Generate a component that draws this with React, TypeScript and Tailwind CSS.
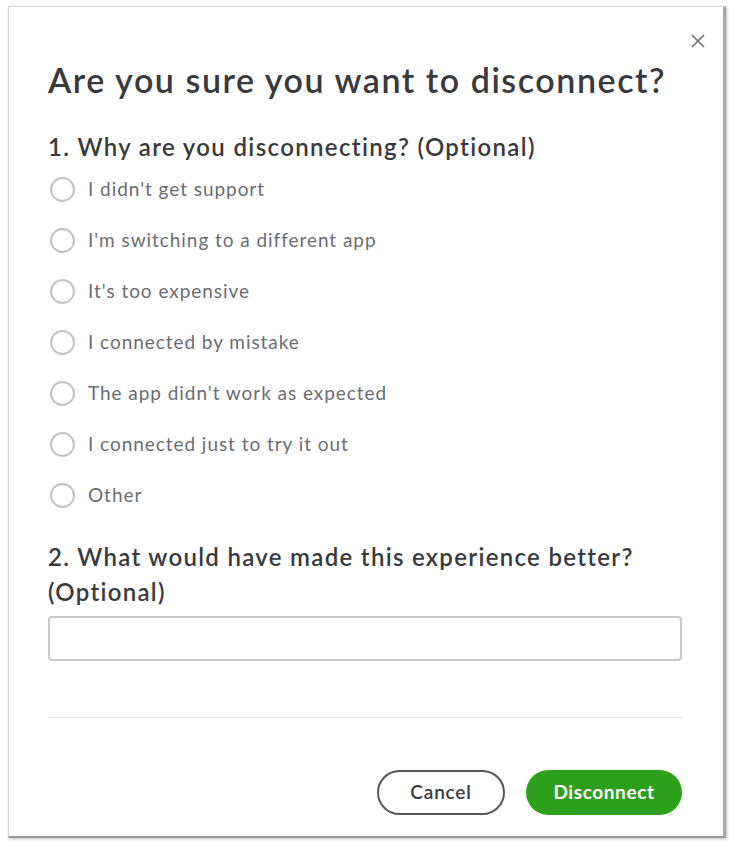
import React, { useState } from "react";

const reasons = [
  "I didn't get support",
  "I'm switching to a different app",
  "It's too expensive",
  "I connected by mistake",
  "The app didn't work as expected",
  "I connected just to try it out",
  "Other",
];

function Radio({ label, checked, onPick }: { label: string; checked: boolean; onPick: () => void }) {
  return (
    <label className="flex h-[51px] cursor-pointer items-center" onClick={onPick}>
      <span className="ml-[2px] flex h-[25px] w-[25px] items-center justify-center rounded-full border-2 border-[#c1c1c1] bg-white">
        {checked && <span className="h-[11px] w-[11px] rounded-full bg-[#2ca01c]" />}
      </span>
      <span className="ml-[13px] text-[19px] tracking-[0.95px] text-[#6b6c72]">{label}</span>
    </label>
  );
}

export default function App() {
  const [picked, setPicked] = useState<number | null>(null);

  return (
    <div className="h-[850px] w-full bg-white pl-[8px] pt-[6px]" style={{ fontFamily: "Lato, 'Open Sans', sans-serif" }}>
      <div className="relative h-[832px] w-[718px] border border-[#d6d6d6] border-b-[2px] border-r-[3px] border-b-[#9a9a9a] border-r-[#a8a8a8] bg-white shadow-[1px_1px_3px_rgba(0,0,0,0.25)]">
        {/* close */}
        <button className="absolute right-[17px] top-[26px] text-[#6b6c72]">
          <svg width="16" height="16" viewBox="0 0 16 16" fill="none" stroke="currentColor" strokeWidth="1.6">
            <path d="M2 2 L14 14 M14 2 L2 14" />
          </svg>
        </button>

        <div className="px-[39px] pt-[51px]">
          <h1 className="text-[34px] font-semibold leading-[44px] tracking-[1.55px] text-[#393a3d]">
            Are you sure you want to disconnect?
          </h1>

          <h2 className="mt-[29px] text-[24px] font-semibold leading-[32px] tracking-[1.35px] text-[#393a3d]">
            1. Why are you disconnecting? (Optional)
          </h2>
          <div className="mt-[1px] flex flex-col">
            {reasons.map((r, i) => (
              <Radio key={r} label={r} checked={picked === i} onPick={() => setPicked(i)} />
            ))}
          </div>

          <h2 className="mt-[18px] text-[24px] font-semibold leading-[35px] tracking-[1.3px] text-[#393a3d]">
            2. What would have made this experience better?
            <br />
            (Optional)
          </h2>
          <input
            type="text"
            className="mt-[7px] h-[45px] w-[634px] rounded-[4px] border-2 border-[#c9cacc] px-3 text-[17px] text-[#393a3d] outline-none"
          />

          <div className="mt-[56px] h-px w-[634px] bg-[#e3e5e8]" />

          <div className="mt-[52px] flex w-[634px] justify-end gap-[21px]">
            <button className="h-[45px] w-[128px] rounded-full border-2 border-[#54565b] text-[19px] font-semibold tracking-[0.8px] text-[#393a3d]">
              Cancel
            </button>
            <button className="h-[45px] w-[156px] rounded-full bg-[#2ca01c] text-[19px] font-bold tracking-[0.6px] text-white">
              Disconnect
            </button>
          </div>
        </div>
      </div>
    </div>
  );
}
